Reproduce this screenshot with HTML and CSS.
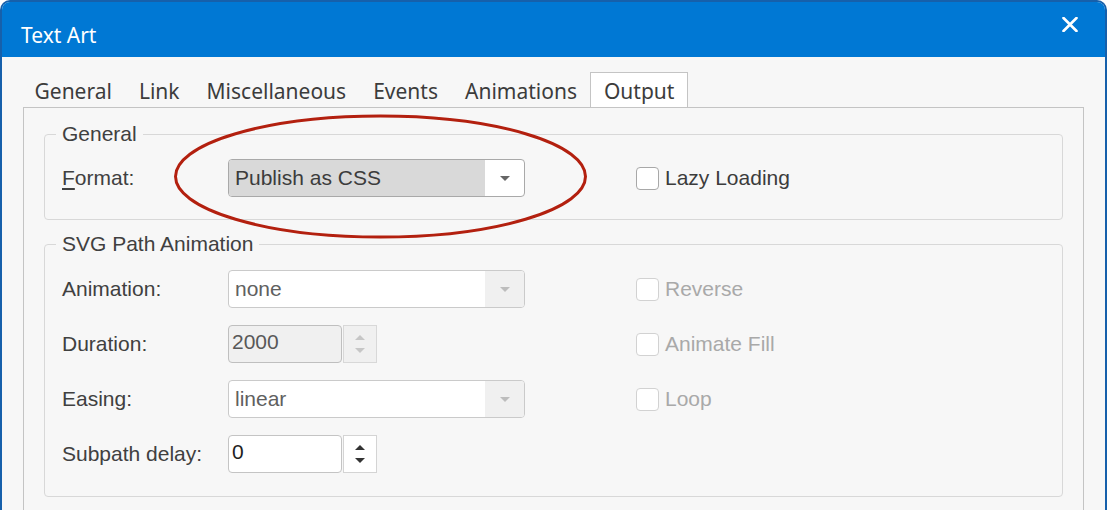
FILE: index.html
```html
<!DOCTYPE html>
<html>
<head>
<meta charset="utf-8">
<link rel="stylesheet" href="styles.css">
</head>
<body>
<div class="window">
  <div class="titlebar">
    <span class="title">Text Art</span>
    <svg class="close" width="16" height="15" viewBox="0 0 16 15"><path d="M1.5 1 L14.5 14 M14.5 1 L1.5 14" stroke="#fff" stroke-width="2.6" stroke-linecap="round"/></svg>
  </div>
  <div class="content">
    <div class="tabs">
      <div class="tab">General</div>
      <div class="tab">Link</div>
      <div class="tab">Miscellaneous</div>
      <div class="tab">Events</div>
      <div class="tab">Animations</div>
      <div class="tab active">Output</div>
    </div>
    <div class="panel">
      <fieldset class="group group-general">
        <legend>General</legend>
        <div class="form-grid">
          <span class="lbl"><u>F</u>ormat:</span>
          <div class="select select-hl">
            <span class="select-value">Publish as CSS</span>
            <span class="select-btn"><i class="tri"></i></span>
          </div>
          <span></span>
          <label class="check"><span class="box"></span>Lazy Loading</label>
        </div>
      </fieldset>
      <fieldset class="group group-svg">
        <legend>SVG Path Animation</legend>
        <div class="form-grid">
          <span class="lbl">Animation:</span>
          <div class="select select-dis">
            <span class="select-value">none</span>
            <span class="select-btn"><i class="tri"></i></span>
          </div>
          <span></span>
          <label class="check disabled"><span class="box"></span>Reverse</label>

          <span class="lbl">Duration:</span>
          <div class="spin spin-dis">
            <span class="spin-input">2000</span>
            <span class="spin-btn"><i class="up"></i><i class="down"></i></span>
          </div>
          <span></span>
          <label class="check disabled"><span class="box"></span>Animate Fill</label>

          <span class="lbl">Easing:</span>
          <div class="select select-dis">
            <span class="select-value">linear</span>
            <span class="select-btn"><i class="tri"></i></span>
          </div>
          <span></span>
          <label class="check disabled"><span class="box"></span>Loop</label>

          <span class="lbl">Subpath delay:</span>
          <div class="spin">
            <span class="spin-input">0</span>
            <span class="spin-btn"><i class="up"></i><i class="down"></i></span>
          </div>
          <span></span>
          <span></span>
        </div>
      </fieldset>
      <svg class="highlight" width="414" height="126" viewBox="0 0 414 126"><ellipse cx="206.5" cy="62.5" rx="205" ry="60.5" fill="none" stroke="#b3200f" stroke-width="3"/></svg>
    </div>
  </div>
</div>
</body>
</html>
```

FILE: styles.css
```css
body {
  margin: 0;
  background: #ffffff;
}

.window {
  width: 1107px;
  height: 510px;
  box-sizing: border-box;
  border: 2px solid #1660ab;
  border-bottom: 0;
  border-radius: 10px 10px 0 0;
  background: #f7f7f7;
  overflow: hidden;
  display: flex;
  flex-direction: column;
}

.titlebar {
  height: 55px;
  flex: none;
  background: #0078d4;
  display: flex;
  align-items: flex-start;
  justify-content: space-between;
  padding: 0 27px 0 19px;
}

.title {
  font-family: "Noto Sans", sans-serif;
  font-size: 21px;
  color: #ffffff;
  padding-top: 19px;
}

.close {
  margin-top: 15px;
}

.content {
  flex: 1;
  display: flex;
  flex-direction: column;
  padding: 15px 21px 0 21px;
}

.tabs {
  display: flex;
  height: 35px;
  flex: none;
  margin-left: -2px;
}

.tab {
  box-sizing: border-box;
  height: 36px;
  padding: 1px 12.5px 0;
  border: 1px solid transparent;
  border-bottom: 0;
  font-family: "Noto Sans", sans-serif;
  font-size: 21px;
  line-height: 34px;
  color: #3c3c3c;
}

.tab.active {
  background: #ffffff;
  border-color: #c4c4c4;
}

.panel {
  flex: 1;
  position: relative;
  border: 1px solid #c4c4c4;
  border-bottom: 0;
  padding: 0 20px;
}

.group {
  margin: 0;
  padding: 0;
  min-width: 0;
  border: 1px solid #d8d8d8;
  border-radius: 4px;
}

.group-general {
  margin-top: 14px;
}

.group-svg {
  margin-top: 12px;
}

.group legend {
  margin-left: 11px;
  padding: 0 6px;
  font-family: "Liberation Sans", Arial, sans-serif;
  font-size: 21px;
  line-height: 24px;
  color: #404040;
}

.form-grid {
  display: grid;
  grid-template-columns: 166px 297px 111px auto;
  grid-auto-rows: 38px;
  row-gap: 17px;
  align-items: center;
  padding: 13px 0 22px 17px;
  font-family: "Liberation Sans", Arial, sans-serif;
  font-size: 21px;
}

.group-svg .form-grid {
  padding-top: 14px;
  padding-bottom: 23px;
}

.lbl {
  color: #404040;
}

.lbl u {
  text-underline-offset: 3px;
}

.select {
  display: flex;
  height: 38px;
  box-sizing: border-box;
  border: 1px solid #a9a9a9;
  border-radius: 4px;
  background: #ffffff;
  overflow: hidden;
}

.select-value {
  flex: 1;
  display: flex;
  align-items: center;
  padding-left: 6px;
  color: #3c3c3c;
}

.select-btn {
  width: 39px;
  display: flex;
  align-items: center;
  justify-content: center;
}

.tri {
  width: 0;
  height: 0;
  border-left: 5px solid transparent;
  border-right: 5px solid transparent;
  border-top: 5px solid #666666;
}

.select-hl .select-value {
  background: #d9d9d9;
}

.select-dis {
  border-color: #cacaca;
}

.select-dis .select-value {
  color: #606060;
}

.select-dis .select-btn {
  background: #f0f0f0;
}

.select-dis .tri {
  border-top-color: #bdbdbd;
}

.spin {
  display: flex;
  gap: 1px;
  height: 38px;
}

.spin-input {
  width: 114px;
  box-sizing: border-box;
  border: 1px solid #c4c4c4;
  border-radius: 4px;
  background: #ffffff;
  display: flex;
  align-items: center;
  padding: 0 0 4px 3px;
  color: #1e1e1e;
}

.spin-btn {
  width: 34px;
  box-sizing: border-box;
  border: 1px solid #d4d4d4;
  background: #ffffff;
  display: flex;
  flex-direction: column;
  align-items: center;
  justify-content: center;
  gap: 8px;
}

.spin-btn .up,
.spin-btn .down {
  width: 0;
  height: 0;
  border-left: 5px solid transparent;
  border-right: 5px solid transparent;
}

.spin-btn .up {
  border-bottom: 5px solid #333333;
}

.spin-btn .down {
  border-top: 5px solid #333333;
}

.spin-dis .spin-input {
  background: #f0f0f0;
  border-color: #bfbfbf;
  color: #585858;
}

.spin-dis .spin-btn {
  background: #f0f0f0;
  border-color: #d8d8d8;
}

.spin-dis .spin-btn .up {
  border-bottom-color: #c6c6c6;
}

.spin-dis .spin-btn .down {
  border-top-color: #c6c6c6;
}

.check {
  display: flex;
  align-items: center;
  gap: 6px;
  color: #3c3c3c;
}

.box {
  width: 23px;
  height: 23px;
  box-sizing: border-box;
  border: 1px solid #a8a8a8;
  border-radius: 4px;
  background: #ffffff;
}

.check.disabled {
  color: #a9a9a9;
}

.check.disabled .box {
  border-color: #d2d2d2;
}

.highlight {
  position: absolute;
  left: 150px;
  top: 6px;
}
```
